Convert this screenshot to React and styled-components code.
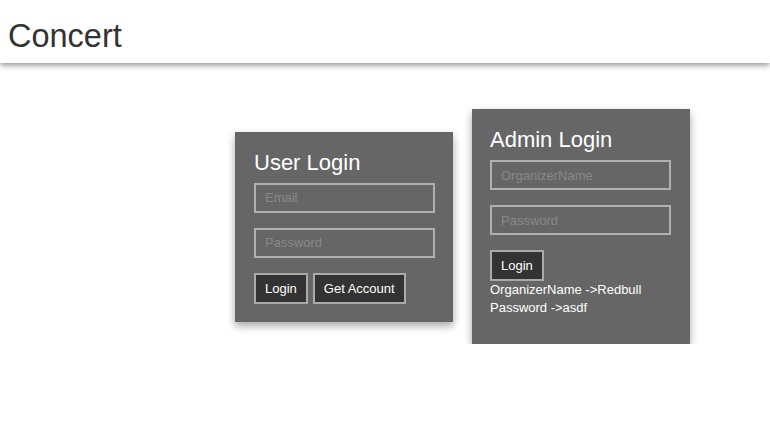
import React from 'react';
import styled, { createGlobalStyle } from 'styled-components';

const GlobalStyle = createGlobalStyle`
  body {
    margin: 0;
    background: #fff;
    font-family: "Liberation Sans", Arial, sans-serif;
  }
`;

const Header = styled.header`
  height: 63px;
  box-sizing: border-box;
  padding: 20px 0 0 8px;
  background: #fff;
  box-shadow: 0 2px 6px rgba(0, 0, 0, 0.45);
  position: relative;
`;

const Brand = styled.h1`
  margin: 0;
  font-size: 32.5px;
  line-height: 33px;
  font-weight: 400;
  color: #333;
`;

const Main = styled.main`
  display: flex;
  align-items: center;
  gap: 19px;
  padding: 46px 0 0 235px;
`;

const Card = styled.div`
  width: 218px;
  box-sizing: border-box;
  background: #666;
  color: #fff;
  padding: ${(p) => p.$pad || '18px 18px 18px 19px'};
  box-shadow: 0 4px 8px rgba(0, 0, 0, 0.35);
`;

const Title = styled.h2`
  margin: 0 0 8px;
  font-size: 22px;
  font-weight: 400;
  line-height: 25px;
`;

const Input = styled.input`
  display: block;
  width: 181px;
  height: 30px;
  box-sizing: border-box;
  margin: 0 0 15px;
  padding: 0 9px;
  background: transparent;
  border: 2px solid #b0b0b0;
  color: #fff;
  font-family: "Liberation Sans", Arial, sans-serif;
  font-size: 13px;
  outline: none;

  &::placeholder {
    color: #888;
  }
`;

const Buttons = styled.div`
  display: flex;
  gap: 5px;
`;

const Button = styled.button`
  height: 31px;
  box-sizing: border-box;
  padding: 0 9px;
  background: #333;
  border: 2px solid #aaa;
  color: #fff;
  font-family: "Liberation Sans", Arial, sans-serif;
  font-size: 13px;
  cursor: pointer;
`;

const Hint = styled.p`
  margin: 0;
  font-size: 13px;
  line-height: 18px;
`;

export default function App() {
  return (
    <>
      <GlobalStyle />
      <Header>
        <Brand>Concert</Brand>
      </Header>
      <Main>
        <Card $pad="18px 18px 18px 19px">
          <Title>User Login</Title>
          <Input type="email" placeholder="Email" />
          <Input type="password" placeholder="Password" />
          <Buttons>
            <Button>Login</Button>
            <Button>Get Account</Button>
          </Buttons>
        </Card>
        <Card $pad="18px 18px 27px 18px">
          <Title>Admin Login</Title>
          <Input type="text" placeholder="OrganizerName" />
          <Input type="password" placeholder="Password" />
          <Buttons>
            <Button>Login</Button>
          </Buttons>
          <div>
            <Hint>OrganizerName -&gt;Redbull</Hint>
            <Hint>Password -&gt;asdf</Hint>
          </div>
        </Card>
      </Main>
    </>
  );
}
